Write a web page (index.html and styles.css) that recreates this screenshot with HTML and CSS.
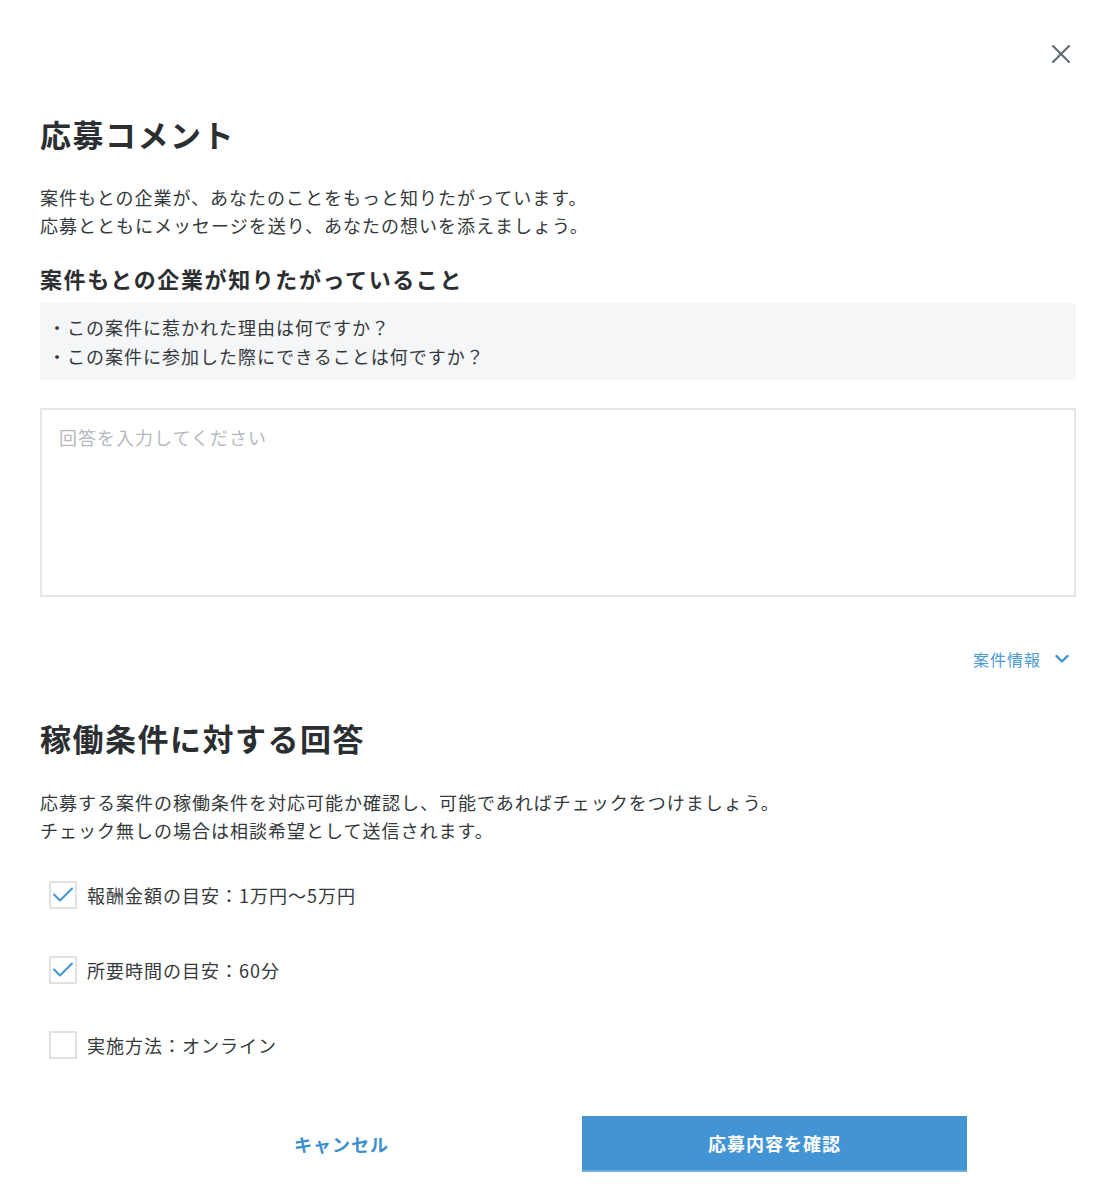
FILE: index.html
```html
<!DOCTYPE html>
<html lang="ja">
<head>
<meta charset="utf-8">
<link rel="stylesheet" href="styles.css">
</head>
<body>
<div class="modal">
  <div class="header">
    <button class="close" aria-label="閉じる">
      <svg width="24" height="24" viewBox="0 0 24 24"><path d="M4 4L20 20M20 4L4 20" stroke="#5e6a74" stroke-width="2.1" stroke-linecap="round"/></svg>
    </button>
  </div>
  <h1 class="title">応募コメント</h1>
  <p class="lead">案件もとの企業が、あなたのことをもっと知りたがっています。<br>応募とともにメッセージを送り、あなたの想いを添えましょう。</p>
  <h2 class="subtitle">案件もとの企業が知りたがっていること</h2>
  <ul class="questions">
    <li>・この案件に惹かれた理由は何ですか？</li>
    <li>・この案件に参加した際にできることは何ですか？</li>
  </ul>
  <textarea class="answer" placeholder="回答を入力してください"></textarea>
  <div class="info-row">
    <span class="info-link">案件情報</span>
    <svg class="chev" width="14" height="10" viewBox="0 0 14 10"><path d="M1.5 2L7 7.5L12.5 2" fill="none" stroke="#3f92d2" stroke-width="2.4" stroke-linecap="round" stroke-linejoin="round"/></svg>
  </div>
  <h1 class="title title2">稼働条件に対する回答</h1>
  <p class="lead lead2">応募する案件の稼働条件を対応可能か確認し、可能であればチェックをつけましょう。<br>チェック無しの場合は相談希望として送信されます。</p>
  <div class="checks">
    <label class="check">
      <span class="box"><svg width="24" height="24" viewBox="0 0 24 24"><path d="M3 11.5L9 17.5L21 5.5" fill="none" stroke="#3d95d8" stroke-width="2" stroke-linecap="round" stroke-linejoin="round"/></svg></span>
      <span class="label">報酬金額の目安：1万円〜5万円</span>
    </label>
    <label class="check">
      <span class="box"><svg width="24" height="24" viewBox="0 0 24 24"><path d="M3 11.5L9 17.5L21 5.5" fill="none" stroke="#3d95d8" stroke-width="2" stroke-linecap="round" stroke-linejoin="round"/></svg></span>
      <span class="label">所要時間の目安：60分</span>
    </label>
    <label class="check">
      <span class="box"></span>
      <span class="label">実施方法：オンライン</span>
    </label>
  </div>
  <div class="actions">
    <button class="btn btn-cancel">キャンセル</button>
    <button class="btn btn-primary">応募内容を確認</button>
  </div>
</div>
</body>
</html>
```

FILE: styles.css
```css
* { box-sizing: border-box; }
body {
  margin: 0;
  background: #fff;
  font-family: "Noto Sans CJK JP", "Noto Sans", sans-serif;
  color: #35393c;
}
.modal {
  width: 1114px;
  padding: 0 38px 0 40px;
}
.header {
  display: flex;
  justify-content: flex-end;
  padding-top: 42px;
  height: 66px;
}
.close {
  width: 24px;
  height: 24px;
  padding: 0;
  margin-right: 3px;
  border: none;
  background: none;
  display: flex;
}
.title {
  margin: 48px 0 0;
  font-size: 31px;
  line-height: 40px;
  letter-spacing: 1.5px;
  font-weight: 700;
  color: #2b2f32;
}
.lead {
  margin: 29px 0 0;
  font-size: 18px;
  line-height: 28px;
  letter-spacing: 1px;
}
.subtitle {
  margin: 23px 0 0;
  font-size: 22px;
  line-height: 32px;
  letter-spacing: 1.6px;
  font-weight: 700;
  color: #2b2f32;
}
.questions {
  list-style: none;
  margin: 9px 0 0;
  padding: 10px 8px 9px;
  background: #f5f6f8;
  font-size: 18px;
  line-height: 29px;
  letter-spacing: 1px;
}
.answer {
  display: block;
  width: 100%;
  height: 189px;
  margin-top: 28px;
  padding: 13px 17px;
  border: 2px solid #e3e7e9;
  border-radius: 0;
  resize: none;
  font-family: inherit;
  font-size: 18px;
  line-height: 28px;
  letter-spacing: 1px;
  color: #35393c;
}
.answer::placeholder { color: #b6babe; }
.info-row {
  margin-top: 48px;
  display: flex;
  justify-content: flex-end;
  align-items: center;
  gap: 14px;
  padding-right: 7px;
  height: 28px;
}
.info-link {
  font-size: 16px;
  letter-spacing: 1px;
  color: #4a9ad4;
}
.title2 { margin-top: 45px; }
.lead2 { margin-top: 30px; }
.checks {
  margin-top: 37px;
  display: flex;
  flex-direction: column;
  gap: 47px;
}
.check {
  display: flex;
  align-items: center;
  gap: 10px;
  height: 28px;
  padding-left: 9px;
}
.box {
  width: 28px;
  height: 28px;
  border: 2px solid #dfe3e6;
  display: flex;
  align-items: center;
  justify-content: center;
}
.label {
  font-size: 18px;
  letter-spacing: 1px;
  line-height: 28px;
}
.actions {
  margin-top: 57px;
  display: flex;
  justify-content: center;
  gap: 48px;
  padding-bottom: 22px;
}
.btn {
  width: 385px;
  height: 56px;
  border: none;
  font-family: inherit;
  font-size: 18px;
  font-weight: 700;
  letter-spacing: 1px;
}
.btn-cancel {
  background: none;
  color: #3d8fd0;
}
.btn-primary {
  background: #4394d4;
  color: #fff;
  border-bottom: 2px solid #6aaee2;
}
```
